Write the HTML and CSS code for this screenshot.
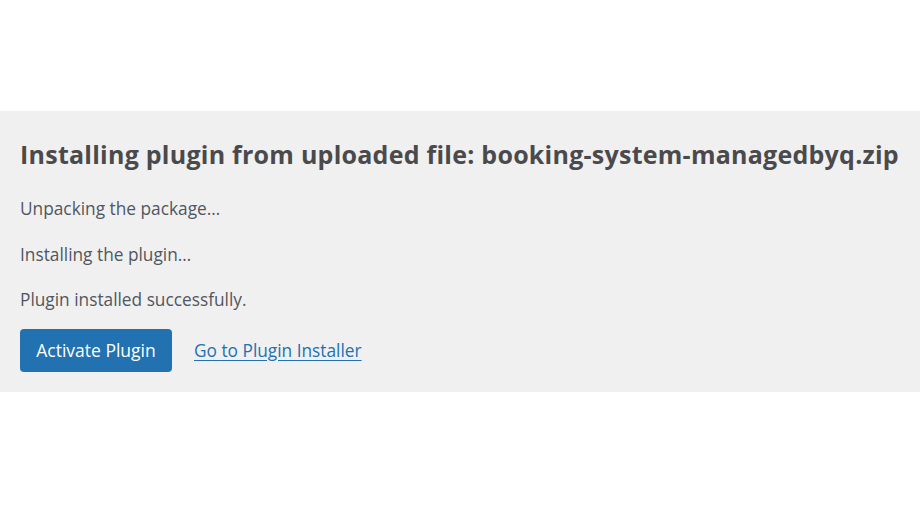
FILE: index.html
```html
<!DOCTYPE html>
<html lang="en">
<head>
<meta charset="utf-8">
<title>Installing plugin</title>
<link rel="stylesheet" href="styles.css">
</head>
<body>
<div class="top-space"></div>
<main class="panel">
  <h1 class="title">Installing plugin from uploaded file: booking-system-managedbyq.zip</h1>
  <p class="step">Unpacking the package…</p>
  <p class="step">Installing the plugin…</p>
  <p class="step">Plugin installed successfully.</p>
  <div class="actions">
    <a class="button" href="#">Activate Plugin</a>
    <a class="link" href="#">Go to Plugin Installer</a>
  </div>
</main>
</body>
</html>
```

FILE: styles.css
```css
html, body {
  margin: 0;
  padding: 0;
  background: #ffffff;
}
body {
  width: 920px;
  height: 517px;
  overflow: hidden;
  font-family: "Open Sans", "Noto Sans", sans-serif;
}
.top-space {
  height: 111px;
}
.panel {
  background: #f0f0f1;
  height: 281px;
  box-sizing: border-box;
  padding: 26px 20px 0 20px;
}
.title {
  margin: 0;
  font-family: "Open Sans", sans-serif;
  font-weight: 700;
  font-size: 25px;
  line-height: 34px;
  color: #4a4a4c;
  letter-spacing: 0.25px;
  white-space: nowrap;
}
.step {
  margin: 0;
  font-size: 17.3px;
  line-height: 24px;
  color: #50575e;
  height: 45.5px;
}
.step:first-of-type {
  margin-top: 26px;
}
.actions {
  display: flex;
  align-items: center;
  gap: 22px;
  margin-top: -5px;
}
.button {
  display: inline-flex;
  align-items: center;
  justify-content: center;
  width: 152px;
  height: 43px;
  box-sizing: border-box;
  background: #2271b1;
  color: #ffffff;
  border-radius: 4px;
  text-decoration: none;
  font-size: 17.5px;
}
.link {
  color: #2271b1;
  font-size: 17.3px;
  text-decoration: underline;
  text-underline-offset: 3px;
}
```
